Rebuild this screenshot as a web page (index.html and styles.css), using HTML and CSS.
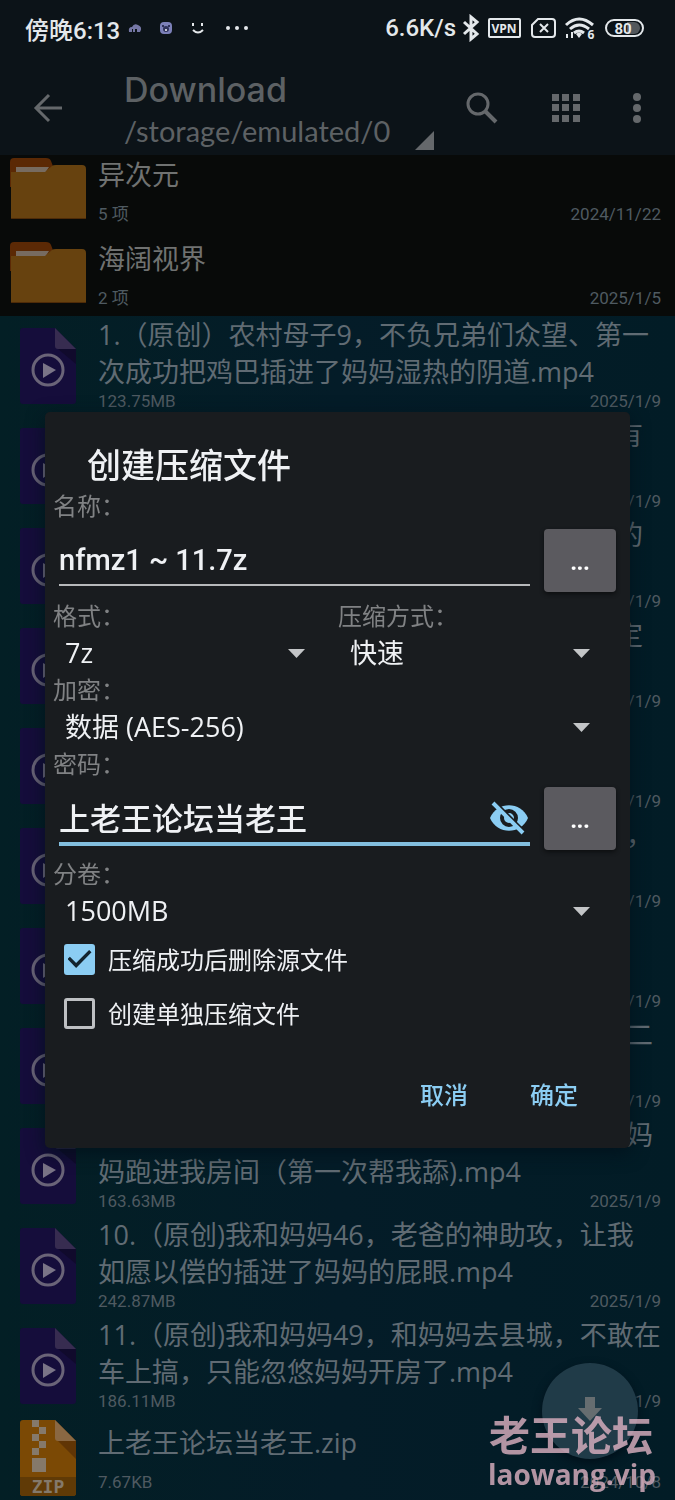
FILE: index.html
```
<!DOCTYPE html>
<html lang="zh-CN">
<head>
<meta charset="utf-8">
<meta name="viewport" content="width=device-width, initial-scale=1">
<title>Download</title>
<link rel="stylesheet" href="styles.css">
</head>
<body>
<svg class="sprite" aria-hidden="true">
  <symbol id="folder" viewBox="0 0 76 63">
    <path fill="#5b2905" d="M0 5Q0 1 4 1H36Q40 1 41 4L44 12V30H0Z"/>
    <path fill="#776b60" d="M6 10H39L35 16H6Z"/>
    <path fill="#67420f" d="M1 15H35L42 9Q43 8 46 8H72Q76 8 76 12V61H1Z"/>
    <path fill="#4e2b08" d="M1 61H76V62H1Z"/>
  </symbol>
  <symbol id="video" viewBox="0 0 57 76">
    <path fill="#150d3b" d="M0 3Q0 0 3 0H35L56 21V73Q56 76 53 76H3Q0 76 0 73Z"/>
    <path fill="#100a2c" d="M38 21H56V36Z"/>
    <path fill="#372c50" d="M35 0L56 21H38Q35 21 35 18Z"/>
    <circle cx="28" cy="42" r="15" fill="none" stroke="#6a6478" stroke-width="3"/>
    <path fill="#7a7487" d="M23 35V50L36 42Z"/>
  </symbol>
  <symbol id="zip" viewBox="0 0 57 76">
    <path fill="#7b4905" d="M0 3Q0 0 3 0H35L56 21V73Q56 76 53 76H3Q0 76 0 73Z"/>
    <path fill="#603505" d="M38 21H56V39Z"/>
    <path fill="#8a6843" d="M35 0L56 21H38Q35 21 35 18Z"/>
    <path fill="#603a06" d="M0 57H56V73Q56 76 53 76H3Q0 76 0 73Z"/>
    <path fill="#85796b" d="M12 0h7v7h-7zM19 7h7v7h-7zM12 14h7v7h-7zM19 21h7v7h-7zM12 28h7v7h-7zM12 38h14v14h-14z"/>
    <text x="28" y="73" text-anchor="middle" class="zip-text">ZIP</text>
  </symbol>
</svg>

<header class="header">
  <div class="status">
    <span class="clock">傍晚6:13</span>
    <svg class="notes" width="130" height="24" viewBox="0 0 130 24" aria-hidden="true">
      <path fill="#7577a5" d="M5 16Q4 11 8 11Q10 7 14 9Q19 11 16 16H13V13H11V16H9V13H8V16Z"/>
      <rect x="36" y="6" width="12" height="12" rx="4" fill="#7c80b8"/>
      <path d="M39 9v2M45 9v2" stroke="#2e3159" stroke-width="2"/><circle cx="42" cy="13" r="3" fill="#30335c"/><circle cx="42" cy="14" r="1" fill="#fff"/>
      <path d="M69 7v3M78 7v3M69 14Q74 19 79 14" fill="none" stroke="#e5e8eb" stroke-width="2"/>
      <g fill="#e5e8eb"><circle cx="104" cy="12" r="2"/><circle cx="113" cy="12" r="2"/><circle cx="122" cy="12" r="2"/></g>
    </svg>
    <span class="speed">6.6K/s</span>
    <svg class="signals" width="184" height="28" viewBox="0 0 184 28" aria-hidden="true">
      <g fill="none" stroke="#e4e8eb" stroke-width="2">
        <path d="M4 8L17 20L11 25V3L17 8L4 20" stroke-width="3"/>
        <rect x="29" y="5" width="31" height="18" rx="1"/>
        <path d="M78 5H92Q95 5 95 8V20Q95 23 92 23H75Q72 23 72 20V11ZM80 10L88 18M88 10L80 18"/>
        <path d="M106 11Q119 -1 133 11M110 15Q119 7 129 15M114 19Q119 15 124 19" stroke-width="3"/>
        <rect x="146" y="6" width="37" height="16" rx="8"/>
      </g>
      <path d="M116 20Q119 17 122 20L119 24Z M106 20h2v4h-2zM111 18h2v6h-2z" fill="#e4e8eb"/>
      <path d="M167 8H174A6 6 0 0 1 174 20H167Z" fill="#53585c"/>
      <text x="44" y="19" class="tiny" text-anchor="middle">VPN</text>
      <text x="131" y="25" class="tiny" text-anchor="middle">6</text>
      <text x="163" y="20" class="percent" text-anchor="middle">80</text>
    </svg>
  </div>
  <div class="toolbar">
    <button class="tool" aria-label="返回"><svg width="30" height="30" viewBox="0 0 30 30"><path d="M29 15H3M16 2L3 15L16 28" fill="none" stroke="#65686b" stroke-width="3"/></svg></button>
    <div class="place">
      <h1>Download</h1>
      <p>/storage/emulated/0</p>
      <svg class="corner" width="19" height="19" viewBox="0 0 19 19"><path d="M19 0V19H0Z" fill="#65686b"/></svg>
    </div>
    <nav class="tools">
      <button class="tool" aria-label="搜索"><svg width="32" height="32" viewBox="0 0 32 32"><g fill="none" stroke="#65686b" stroke-width="3"><circle cx="12" cy="12" r="10"/><path d="M19 19L30 30" stroke-width="4"/></g></svg></button>
      <button class="tool" aria-label="视图"><svg width="28" height="28" viewBox="0 0 28 28"><path fill="#65686b" d="M0 0h7v7h-7zM10 0h7v7h-7zM21 0h7v7h-7zM0 10h7v7h-7zM10 10h7v7h-7zM21 10h7v7h-7zM0 21h7v7h-7zM10 21h7v7h-7zM21 21h7v7h-7z"/></svg></button>
      <button class="tool" aria-label="更多"><svg width="8" height="30" viewBox="0 0 8 30"><g fill="#65686b"><circle cx="4" cy="4" r="4"/><circle cx="4" cy="15" r="4"/><circle cx="4" cy="26" r="4"/></g></svg></button>
    </nav>
  </div>
</header>

<main class="list">
  <article class="row short folder first"><svg class="icon" width="76" height="63"><use href="#folder"/></svg><div class="info"><p class="name">异次元</p><p class="meta"><span>5 项</span><time>2024/11/22</time></p></div></article>
  <article class="row short folder"><svg class="icon" width="76" height="63"><use href="#folder"/></svg><div class="info"><p class="name">海阔视界</p><p class="meta"><span>2 项</span><time>2025/1/5</time></p></div></article>
  <article class="row"><svg class="icon" width="57" height="76"><use href="#video"/></svg><div class="info"><p class="name">1.（原创）农村母子9，不负兄弟们众望、第一<br>次成功把鸡巴插进了妈妈湿热的阴道.mp4</p><p class="meta"><span>123.75MB</span><time>2025/1/9</time></p></div></article>
  <article class="row"><svg class="icon" width="57" height="76"><use href="#video"/></svg><div class="info"><p class="name tail">有</p><p class="meta"><time>2025/1/9</time></p></div></article>
  <article class="row"><svg class="icon" width="57" height="76"><use href="#video"/></svg><div class="info"><p class="name tail">的</p><p class="meta"><time>2025/1/9</time></p></div></article>
  <article class="row"><svg class="icon" width="57" height="76"><use href="#video"/></svg><div class="info"><p class="name tail">定</p><p class="meta"><time>2025/1/9</time></p></div></article>
  <article class="row"><svg class="icon" width="57" height="76"><use href="#video"/></svg><div class="info"><p class="name"></p><p class="meta"><time>2025/1/9</time></p></div></article>
  <article class="row"><svg class="icon" width="57" height="76"><use href="#video"/></svg><div class="info"><p class="name tail wide">，</p><p class="meta"><time>2025/1/9</time></p></div></article>
  <article class="row"><svg class="icon" width="57" height="76"><use href="#video"/></svg><div class="info"><p class="name"></p><p class="meta"><time>2025/1/9</time></p></div></article>
  <article class="row"><svg class="icon" width="57" height="76"><use href="#video"/></svg><div class="info"><p class="name tail wide">二</p><p class="meta"><time>2025/1/9</time></p></div></article>
  <article class="row"><svg class="icon" width="57" height="76"><use href="#video"/></svg><div class="info"><p class="name"><span class="tail wide">妈</span>妈跑进我房间（第一次帮我舔).mp4</p><p class="meta"><span>163.63MB</span><time>2025/1/9</time></p></div></article>
  <article class="row"><svg class="icon" width="57" height="76"><use href="#video"/></svg><div class="info"><p class="name">10.（原创)我和妈妈46，老爸的神助攻，让我<br>如愿以偿的插进了妈妈的屁眼.mp4</p><p class="meta"><span>242.87MB</span><time>2025/1/9</time></p></div></article>
  <article class="row"><svg class="icon" width="57" height="76"><use href="#video"/></svg><div class="info"><p class="name">11.（原创)我和妈妈49，和妈妈去县城，不敢在<br>车上搞，只能忽悠妈妈开房了.mp4</p><p class="meta"><span>186.11MB</span><time>2025/1/9</time></p></div></article>
  <article class="row short"><svg class="icon zip" width="57" height="76"><use href="#zip"/></svg><div class="info"><p class="name">上老王论坛当老王.zip</p><p class="meta"><span>7.67KB</span><time>2024/10/8</time></p></div></article>
</main>

<button class="fab" aria-label="下载"><svg width="24" height="28" viewBox="0 0 24 28"><path d="M7 0H17V11H24L12 24L0 11H7Z" fill="#666d70"/></svg></button>

<div class="overlay">
  <form class="dialog" role="dialog" aria-labelledby="dialog-title">
    <h2 id="dialog-title">创建压缩文件</h2>
    <label class="label" for="file">名称：</label>
    <div class="field"><input class="text latin" id="file" type="text" value="nfmz1 ~ 11.7z"><button class="more" type="button">...</button></div>
    <div class="pair">
      <div><label class="label" for="format">格式：</label><div class="select"><select id="format"><option>7z</option></select></div></div>
      <div><label class="label" for="method">压缩方式：</label><div class="select"><select id="method"><option>快速</option></select></div></div>
    </div>
    <label class="label" for="crypt">加密：</label>
    <div class="select"><select id="crypt"><option>数据 (AES-256)</option></select></div>
    <label class="label" for="password">密码：</label>
    <div class="field">
      <div class="secret"><input class="text active" id="password" type="text" value="上老王论坛当老王">
        <button class="eye" type="button" aria-label="隐藏密码"><svg width="38" height="34" viewBox="0 0 38 34"><path d="M0 17C7 0 31 0 38 17C31 34 7 34 0 17Z" fill="#8bcdf3"/><circle cx="19" cy="17" r="7" fill="none" stroke="#191c1f" stroke-width="4"/><path d="M1 -3L38 34" stroke="#191c1f" stroke-width="3"/><path d="M3 2L33 32" stroke="#8bcdf3" stroke-width="4"/></svg></button>
      </div><button class="more" type="button">...</button>
    </div>
    <label class="label" for="volume">分卷：</label>
    <div class="select"><select id="volume"><option>1500MB</option></select></div>
    <label class="check"><input type="checkbox" checked><span>压缩成功后删除源文件</span></label>
    <label class="check"><input type="checkbox"><span>创建单独压缩文件</span></label>
    <div class="actions"><button type="button">取消</button><button type="submit">确定</button></div>
  </form>
</div>
<div class="mark"><strong>老王论坛</strong><b>laowang.vip</b></div>
</body>
</html>
```

FILE: styles.css
```
* { box-sizing: border-box; }
body, h1, h2, p { margin: 0; }
body {
  background: #080a09;
  color: #5b656b;
  font-family: "Open Sans", "Noto Sans CJK SC", sans-serif;
  overflow: hidden;
}
button { border: 0; padding: 0; background: none; color: inherit; font: inherit; }
svg { display: block; }
.sprite { position: absolute; width: 0; height: 0; }
.zip-text { font: bold 18px "DejaVu Sans Mono", monospace; fill: #84796b; }

.header { background: #0c1318; }
.status { display: flex; align-items: center; height: 56px; padding: 0 31px 0 25px; color: #e4e8eb; font: 500 24px Roboto, "Noto Sans CJK SC", sans-serif; }
.notes { margin-left: 4px; }
.speed { margin-left: auto; padding-right: 4px; }
.tiny { font: bold 12px "Open Sans", sans-serif; fill: #e4e8eb; }
.percent { font: bold 15px Roboto, sans-serif; fill: #e4e8eb; }
.toolbar { display: flex; align-items: center; height: 99px; padding: 4px 34px 0 33px; color: #5d6164; }
.tool { flex: none; }
.place { position: relative; width: 310px; margin-left: 61px; padding-top: 5px; }
.place h1 { font: 500 34px/42px Inter, sans-serif; }
.place p { font: 29px/40px Lato, sans-serif; }
.corner { position: absolute; right: 0; bottom: 1px; }
.tools { display: flex; align-items: center; justify-content: space-between; flex: 1; margin-left: 32px; }

.list { overflow: hidden; }
.row { display: grid; grid-template-columns: 98px 1fr; height: 100px; background: linear-gradient(90deg, #031f25, #041c28 50%, #021c26); }
.row.short { height: 84px; }
.row.folder { background: #080a09; }
.row.first { margin-top: -7px; }
.icon { margin: 12px 0 0 20px; }
.folder .icon { margin: 9px 0 0 10px; }
.icon.zip { margin-top: 4px; }
.info { padding-right: 14px; }
.name { height: 74px; font-size: 27px; line-height: 37px; white-space: nowrap; color: #606b73; }
.folder .name { color: #707271; }
.short .name { height: 55px; padding-top: 8px; }
.tail { display: block; padding-right: 18px; text-align: right; }
.tail.wide { padding-right: 8px; }
.meta { display: flex; font: 17px/22px Roboto, "Noto Sans CJK SC", sans-serif; color: #4f5a61; }
.meta time { margin-left: auto; }

.fab { position: fixed; right: 37px; bottom: 41px; width: 96px; height: 96px; border-radius: 50%; background: #203b48; box-shadow: 0 4px 10px #00101a; display: grid; place-items: center; }

.overlay { position: fixed; inset: 0; display: flex; align-items: center; padding: 60px 45px 0; }
.dialog { width: 100%; padding: 28px 14px 31px 8px; border-radius: 5px; background: #191c1f; box-shadow: 0 5px 18px #00101acc; color: #eff1f4; }
.dialog h2 { padding-left: 34px; font-size: 34px; line-height: 50px; font-weight: 500; }
.label { display: block; font-size: 24px; line-height: 32px; color: #808284; }
.field { display: flex; align-items: flex-start; gap: 14px; padding: 7px 0 8px 6px; }
.text { flex: 1; min-width: 0; width: 100%; height: 57px; padding: 4px 0 0; border: 0; border-bottom: 2px solid #b7b9bb; border-radius: 0; outline: 0; background: none; color: #eff1f4; font: 500 31px "Noto Sans CJK SC", sans-serif; }
.text.latin { padding-top: 6px; font: 500 29px Roboto, sans-serif; }
.text.active { height: 59px; border-bottom: 4px solid #83bfdf; }
.secret { position: relative; flex: 1; display: flex; }
.secret .text { padding-right: 44px; }
.eye { position: absolute; right: 2px; top: 14px; }
.more { width: 72px; height: 63px; border-radius: 4px; background: #5b5a5f; color: #fff; font: bold 22px "Open Sans", sans-serif; box-shadow: 0 2px 4px #0c0e10; }
.pair { display: grid; grid-template-columns: 1fr 1fr; gap: 7px; }
.select { position: relative; height: 42px; }
.select select { appearance: none; width: 100%; height: 42px; padding: 0 50px 2px 12px; border: 0; outline: 0; background: none; color: #eff1f4; font: 27px "Open Sans", "Noto Sans CJK SC", sans-serif; }
.select::after { content: ""; position: absolute; right: 26px; top: 17px; width: 17px; height: 9px; background: #c3c5c7; clip-path: polygon(0 0, 100% 0, 50% 100%); pointer-events: none; }
.check { display: flex; align-items: center; height: 54px; padding-left: 11px; gap: 13px; font-size: 24px; }
.check span { padding-bottom: 2px; }
.check input { appearance: none; width: 31px; height: 31px; margin: 0; border: 3px solid #bec0c3; border-radius: 3px; display: grid; place-items: center; }
.check input:checked { border-color: #8bcdf3; background: #8bcdf3; }
.check input:checked::after { content: ""; width: 24px; height: 18px; background: #12242f; clip-path: polygon(0 50%, 10% 38%, 36% 72%, 90% 0, 100% 12%, 36% 100%); }
.actions { display: flex; justify-content: flex-end; gap: 62px; padding: 29px 38px 0 0; color: #8bcdf3; font-size: 24px; font-weight: 500; }
.actions button { height: 48px; }

.mark { position: fixed; right: 19px; bottom: 8px; display: grid; justify-items: end; color: #dfb3c3cc; pointer-events: none; }
.mark strong { padding-right: 3px; font: 700 41px/46px "Noto Sans CJK SC", sans-serif; }
.mark b { font: 700 28px/36px "Open Sans", sans-serif; }
```
